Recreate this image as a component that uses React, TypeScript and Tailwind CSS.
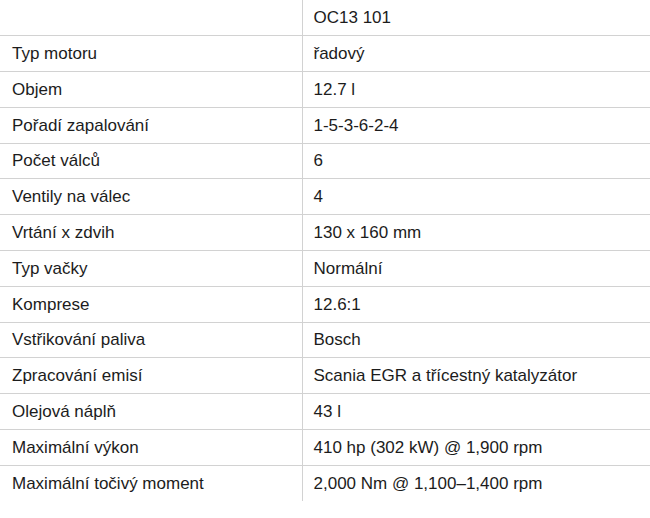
import React from 'react'

const rows: [string, string][] = [
  ['', 'OC13 101'],
  ['Typ motoru', 'řadový'],
  ['Objem', '12.7 l'],
  ['Pořadí zapalování', '1-5-3-6-2-4'],
  ['Počet válců', '6'],
  ['Ventily na válec', '4'],
  ['Vrtání x zdvih', '130 x 160 mm'],
  ['Typ vačky', 'Normální'],
  ['Komprese', '12.6:1'],
  ['Vstřikování paliva', 'Bosch'],
  ['Zpracování emisí', 'Scania EGR a třícestný katalyzátor'],
  ['Olejová náplň', '43 l'],
  ['Maximální výkon', '410 hp (302 kW) @ 1,900 rpm'],
  ['Maximální točivý moment', '2,000 Nm @ 1,100–1,400 rpm'],
]

export default function App() {
  return (
    <div className="w-[650px] h-[518px] bg-white text-[#1c1c1c] text-[17px] font-['Liberation_Sans',Arial,sans-serif]">
      <table className="w-full border-collapse">
        <tbody>
          {rows.map(([label, value], i) => (
            <tr key={i} className={i === 0 ? 'h-[35.8px]' : 'h-[35.8px] border-t border-[#d2d2d2]'}>
              <td className="w-[302px] pl-3 border-r border-[#d2d2d2] align-middle">{label}</td>
              <td className="pl-[11px] align-middle">{value}</td>
            </tr>
          ))}
        </tbody>
      </table>
    </div>
  )
}
